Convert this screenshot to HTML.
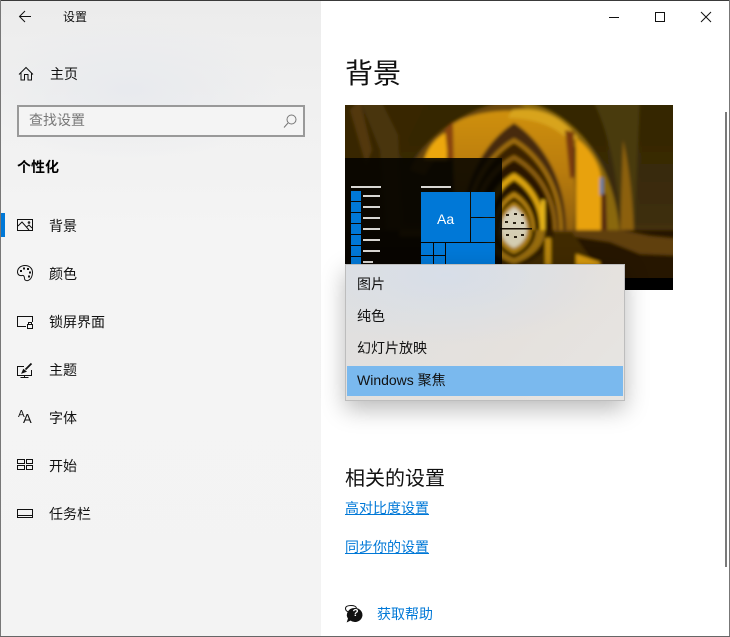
<!DOCTYPE html>
<html lang="zh"><head><meta charset="utf-8"><title>设置</title>
<style>
html,body{margin:0;padding:0;width:730px;height:637px;overflow:hidden;background:#fff}
body{position:relative;font-family:"Liberation Sans","Noto Sans CJK SC",sans-serif;color:#111;font-size:14px}
.t{position:absolute;white-space:nowrap;line-height:20px;height:20px}
.a{position:absolute}
#side{position:absolute;left:0;top:0;width:321px;height:637px;background:radial-gradient(ellipse 150px 70px at 130px 90px,#e8eaee,rgba(232,234,238,0) 100%),linear-gradient(180deg,#ececec 0,#f1f1f1 130px,#f4f4f4 240px,#f3f3f3 100%)}
svg.i{position:absolute;left:0;top:0;width:730px;height:637px;fill:none;stroke:#111;stroke-width:1}
a{color:#0078d7;text-decoration:underline;text-underline-offset:1px}
</style></head><body>
<div id="side"></div>

<div class="t" style="left:63px;top:7px;font-size:12px">设置</div>
<div class="t" style="left:50px;top:64px">主页</div>
<div class="a" style="left:17px;top:105px;width:284px;height:28px;border:2px solid #999;background:#f4f4f4"></div>
<div class="t" style="left:29px;top:110px;color:#777">查找设置</div>
<div class="t" style="left:17px;top:157px;font-weight:bold;color:#000">个性化</div>
<div class="a" style="left:1px;top:213px;width:4px;height:24px;background:#0078d7"></div>
<div class="t" style="left:49px;top:216px">背景</div>
<div class="t" style="left:49px;top:264px">颜色</div>
<div class="t" style="left:49px;top:312px">锁屏界面</div>
<div class="t" style="left:49px;top:360px">主题</div>
<div class="t" style="left:49px;top:408px">字体</div>
<div class="t" style="left:49px;top:456px">开始</div>
<div class="t" style="left:49px;top:504px">任务栏</div>
<div class="a" style="left:18px;top:409px;font:10px/12px 'Liberation Sans',sans-serif">A</div>
<div class="a" style="left:23px;top:412px;font:13px/14px 'Liberation Sans',sans-serif">A</div>

<svg class="i" viewBox="0 0 730 637">
<path d="M31 16.5H20M25 11L19.5 16.5L25 22"/>
<path d="M19 74.5L26 67.5L33 74.5M21 73V80H24.5V74.5H28V80H31.5V73"/>
<g stroke="#777"><circle cx="291.5" cy="119.5" r="4.5"/><path d="M288 123L284 127.5"/></g>
<rect x="17.5" y="219.5" width="15" height="11"/><path d="M18 226L22 222L29 230M26.500 227L29 225L32 228"/><circle cx="29" cy="222.500" r=".8"/>
<path d="M25 265.500C20 265.500 17.500 269 17.500 272C17.500 275 20 276 22 275.500C24 275 24.500 277 24.500 278.500C24.500 280 26 281 28 280.500C31 279.500 32.500 276 32.500 272.500C32.500 268.500 29.500 265.500 25 265.500Z"/>
<g fill="#111" stroke="none"><rect x="20" y="270" width="2" height="2"/><rect x="23" y="267.500" width="2" height="2"/><rect x="27" y="268" width="2" height="2"/><rect x="29" y="271.500" width="2" height="2"/><rect x="28" y="275.500" width="2" height="2"/></g>
<path d="M26 326.500H17.500V316.500H32.500V322"/><rect x="27.500" y="324.500" width="5" height="4"/><path d="M28.500 324.500V322.500H31.500V324.500"/>
<path d="M24 366.500H17.500V375.500H31.500V370M24.500 375.500V377.500M20.500 377.500H28.500"/><path d="M31.500 363.500L25.500 369.500" stroke-width="1.800"/><path d="M22 373L23.500 369.500L26 371.500Z" fill="#111"/>
<rect x="17.500" y="459.500" width="7" height="4"/><rect x="26.500" y="459.500" width="6" height="4"/><rect x="17.500" y="465.500" width="7" height="4"/><rect x="26.500" y="465.500" width="6" height="4"/>
<rect x="17.500" y="509.500" width="15" height="8"/><path d="M18 515.500H32"/>
<path d="M609 17.500H619"/><rect x="655.500" y="12.500" width="9" height="9"/><path d="M701 12L711 22M711 12L701 22"/>
<path d="M726 112V567" stroke="#7a7a7a" stroke-width="2"/>
<path d="M351.500 612.500C347.500 612.500 345.500 610.500 345.500 608.500C345.500 606.500 348 605.500 351 605.500C354 605.500 356 606.500 356.500 608"/>
<path d="M353.500 608.500a7 6.500 0 1 1 -4 11.500l-3 1.500 1-3a7 6.500 0 0 1 6-10z" fill="#111" transform="translate(1 0)"/>
</svg>
<div class="a" style="left:350px;top:608px;width:11px;text-align:center;font:bold 10px/12px 'Liberation Sans',sans-serif;color:#fff">?</div>

<div class="a" style="left:345px;top:55px;font-size:28px;line-height:38px">背景</div>

<svg class="a" style="left:345px;top:105px" width="328" height="185" viewBox="345 105 328 185">
<defs>
<filter id="b" x="-5%" y="-5%" width="110%" height="110%"><feGaussianBlur stdDeviation="1.500"/></filter>
<linearGradient id="w" x1="0" y1="0" x2="0" y2="1"><stop offset="0" stop-color="#322405"/><stop offset=".7" stop-color="#3d2e08"/><stop offset=".8" stop-color="#553607"/><stop offset=".9" stop-color="#2e1c04"/><stop offset="1" stop-color="#0f0902"/></linearGradient>
<linearGradient id="g" x1="0" y1="0" x2="0" y2="1"><stop offset="0" stop-color="#cf9010"/><stop offset=".5" stop-color="#b97c0d"/><stop offset="1" stop-color="#8f5f0a"/></linearGradient>
<path id="r" d="M-1 0C-1 -.55 -.4 -.88 0 -1C.4 -.88 1 -.55 1 0Z"/>
</defs>
<rect x="345" y="105" width="328" height="185" fill="#000"/>
<g filter="url(#b)">
<rect x="330" y="90" width="360" height="188" fill="url(#w)"/>
<path d="M340 95H430L395 165L395 278H340Z" fill="#382806"/>
<path d="M378 95L398 135L405 278H390L380 150L360 100Z" fill="#4a3409"/>
<path d="M360 100L372 150L366 165L350 110Z" fill="#523708"/>
<path d="M590 95H640L634 235H622C618 180 610 130 590 95Z" fill="#4a3b09"/>
<path d="M623 140C630 170 633 205 634 238H620Z" fill="#8c600c"/>
<path d="M515 100C575 108 616 165 620 236L606 236C602 170 570 120 512 114Z" fill="#8a6810"/>
<path d="M410 170C425 135 470 105 515 100L530 112C480 118 440 145 425 175Z" fill="#6c4a0d"/>
<path d="M424 160C428 146 438 136 447 132L447 160Z" fill="#eca70a"/>
<path d="M445 130L453 122L457 160L448 160Z" fill="#8a4509"/>
<path d="M453 124C475 110 520 106 552 118C572 130 578 170 574 232H455Z" fill="url(#g)"/>
<path d="M512 110C540 106 562 116 578 138L570 142C555 124 530 118 508 118Z" fill="#d8a41c"/>
<path d="M565 130L574 132L574 178L570 178Z" fill="#7c3b0a"/>
<path d="M576 138C590 148 600 165 601 178V231H576Z" fill="#e8a20c"/>
<rect x="600" y="178" width="3" height="17" fill="#4a7fb5"/>
<path d="M601 194H606L607 231H601Z" fill="#54280a"/>
<use href="#r" transform="translate(514 230) scale(52 107)" fill="#472a09"/>
<use href="#r" transform="translate(514 230) scale(49 92)" fill="#a06e10"/>
<use href="#r" transform="translate(514 230) scale(45 87)" fill="#3a2106"/>
<use href="#r" transform="translate(514 230) scale(43 75)" fill="#8e6110"/>
<use href="#r" transform="translate(514 230) scale(39 70)" fill="#2a1805"/>
<use href="#r" transform="translate(514 230) scale(31 57)" fill="#dca40e"/>
<use href="#r" transform="translate(514 230) scale(26 50)" fill="#261504"/>
<use href="#r" transform="translate(514 230) scale(21 38)" fill="#b8840f"/>
<use href="#r" transform="translate(514 230) scale(18 33)" fill="#362105"/>
<use href="#r" transform="translate(514 230) scale(16 28)" fill="#b0800f"/>
<use href="#r" transform="translate(514 230) scale(13 23)" fill="#d8d2bc"/>
<rect x="541" y="200" width="4" height="30" fill="#e8b81c"/>
<rect x="330" y="230" width="360" height="60" fill="#261703"/>
<path d="M400 230H620L650 236L690 240V256L640 254L610 242L570 236H400Z" fill="#61400a"/>
<path d="M460 232H572L600 272H460Z" fill="#3f2906"/>
<use href="#r" transform="translate(514 230) scale(40 -38)" fill="#2e1c05"/>
<use href="#r" transform="translate(514 230) scale(31 -34)" fill="#966c0e"/>
<use href="#r" transform="translate(514 230) scale(22 -28)" fill="#2e1c05"/>
<use href="#r" transform="translate(514 230) scale(18 -24)" fill="#a87a0e"/>
<use href="#r" transform="translate(514 230) scale(13 -18)" fill="#d4cdb2"/>
<rect x="545" y="238" width="6" height="27" fill="#b8860f"/>
<path d="M576 254L600 262V265H576Z" fill="#d79a10"/>
</g>
<g fill="#2a2214"><rect x="506" y="214" width="3" height="2"/><rect x="514" y="213" width="3" height="2"/><rect x="521" y="214" width="3" height="2"/><rect x="505" y="221" width="3" height="2"/><rect x="513" y="222" width="3" height="2"/><rect x="521" y="222" width="3" height="2"/><rect x="506" y="234" width="3" height="2"/><rect x="514" y="236" width="3" height="2"/><rect x="521" y="234" width="3" height="2"/></g>
<rect x="500" y="228" width="32" height="1.500" fill="#1a1005"/>
<rect x="345" y="278" width="328" height="12" fill="#000"/>
<rect x="345" y="158" width="157" height="107" fill="#050300" fill-opacity=".88"/>
<g fill="#d8d6d2">
<rect x="351" y="186" width="30" height="2"/><rect x="421" y="186" width="30" height="2"/>
<rect x="363" y="195" width="17" height="2"/><rect x="363" y="206" width="17" height="2"/><rect x="363" y="217" width="17" height="2"/><rect x="363" y="228" width="17" height="2"/><rect x="363" y="239" width="17" height="2"/><rect x="363" y="250" width="17" height="2"/><rect x="363" y="261" width="10" height="2"/>
</g>
<g fill="#0078d7">
<rect x="351" y="191" width="10" height="10"/><rect x="351" y="202" width="10" height="10"/><rect x="351" y="213" width="10" height="10"/><rect x="351" y="224" width="10" height="10"/><rect x="351" y="235" width="10" height="10"/><rect x="351" y="246" width="10" height="10"/><rect x="351" y="257" width="10" height="8"/>
<rect x="421" y="192" width="49" height="50"/><rect x="471" y="192" width="24" height="25"/><rect x="471" y="218" width="24" height="24"/>
<rect x="421" y="243" width="12" height="12"/><rect x="434" y="243" width="11" height="12"/><rect x="446" y="243" width="49" height="22"/><rect x="421" y="256" width="12" height="9"/><rect x="434" y="256" width="11" height="9"/>
</g>
<text x="437" y="224" font-family="Liberation Sans" font-size="14" fill="#fff">Aa</text>
</svg>

<div class="a" style="left:345px;top:264px;width:278px;height:135px;border:1px solid #bdbdbd;box-shadow:0 8px 22px rgba(0,0,0,.28);background:radial-gradient(ellipse 170px 70px at 100px 10px,#d7dee8,rgba(215,222,232,0) 100%),linear-gradient(135deg,#dfe0e0,#e5e1dd 60%,#e6e5e3)"></div>
<div class="a" style="left:347px;top:366px;width:276px;height:30px;background:#7ab9ee"></div>
<div class="t" style="left:357px;top:274px">图片</div>
<div class="t" style="left:357px;top:306px">纯色</div>
<div class="t" style="left:357px;top:338px">幻灯片放映</div>
<div class="t" style="left:357px;top:370px">Windows 聚焦</div>

<div class="a" style="left:345px;top:465px;font-size:20px;line-height:28px">相关的设置</div>
<a class="t" style="left:345px;top:498px">高对比度设置</a>
<a class="t" style="left:345px;top:537px">同步你的设置</a>
<div class="t" style="left:377px;top:604px;color:#0078d7">获取帮助</div>

<div class="a" style="left:0;top:0;width:730px;height:1px;background:#3a3a3a"></div>
<div class="a" style="left:0;top:0;width:1px;height:637px;background:#777"></div>
<div class="a" style="left:729px;top:0;width:1px;height:637px;background:#777"></div>
<div class="a" style="left:0;top:636px;width:730px;height:1px;background:#666"></div>
</body></html>
